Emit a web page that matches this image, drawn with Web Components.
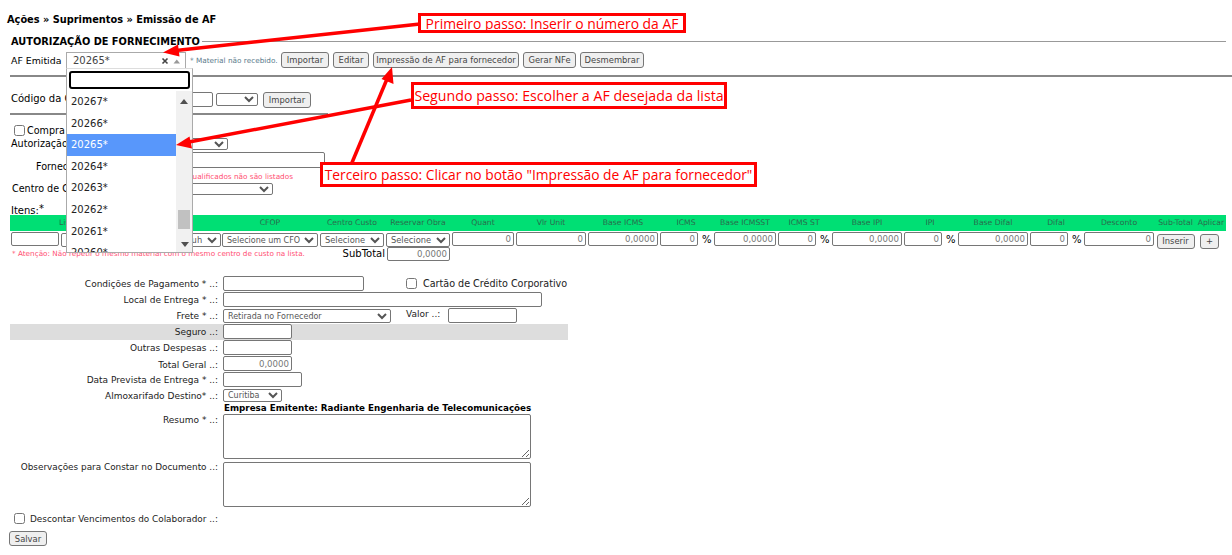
<!DOCTYPE html>
<html lang="pt-BR">
<head>
<meta charset="utf-8">
<title>Emissão de AF</title>
<style>
html,body{margin:0;padding:0;background:#fff}
</style>
</head>
<body>
<af-page></af-page>
<script>
/* Shared look of the native form controls. Rules don't cross shadow roots, so
   every element that owns inputs pastes this into its own <style>. */
var FIELD_CSS = `
input[type=text],textarea{box-sizing:border-box;margin:0;padding:0 2px;border:1px solid #767676;border-radius:2px;background:#fff;font:8.6px "DejaVu Sans",sans-serif;color:#777;display:block}
input.num{text-align:right}
textarea{resize:both}
select{box-sizing:border-box;margin:0;padding:0;border:1px solid #767676;border-radius:2px;background:#fff;font:8.3px "DejaVu Sans",sans-serif;color:#555;display:block}
input[type=checkbox]{margin:0;width:11px;height:11px;display:block;flex:none}
`;

/* Small helper: every element is a template + shadow root, nothing more. */
function defineEl(name, html) {
  var tpl = document.createElement('template');
  tpl.innerHTML = html;
  customElements.define(name, class extends HTMLElement {
    connectedCallback() {
      if (this.shadowRoot) return;
      this.attachShadow({ mode: 'open' }).appendChild(tpl.content.cloneNode(true));
    }
  });
}

defineEl('af-btn', `<style>
:host{display:block;width:var(--w,48px);height:var(--h,16px)}
button{box-sizing:border-box;width:100%;height:100%;margin:0;padding:0;border:1px solid #767676;border-radius:3px;background:#efefef;color:#444;font:8.4px "DejaVu Sans",sans-serif;white-space:nowrap}
</style><button type="button"><slot></slot></button>`);

defineEl('af-header', `<style>${FIELD_CSS}
:host{display:block;font:9.6px "DejaVu Sans",sans-serif;color:#000}
.crumb{height:36px;padding:13px 0 0 7px;box-sizing:border-box;font:bold 9.8px/13px "DejaVu Sans",sans-serif}
.legend{display:flex;align-items:center;height:12px;padding:0 6px 0 11px;gap:2px;font:bold 9.8px/12px "DejaVu Sans",sans-serif}
.legend i{flex:1;height:1px;background:#999;margin-top:-1px}
.af{display:flex;align-items:center;height:16px;margin-top:4px;padding-left:11px}
.af .lab{width:55px;font-size:9.4px}
.af .gap{width:120px;flex:none}
.note{width:87px;margin:0 4px;font-size:7.3px;color:#5b7b8c;white-space:nowrap}
.btns{display:flex;gap:4px}
.rule{height:2px;background:#888;margin:7px 0 0 10px}
.cod{display:flex;align-items:flex-start;height:16px;margin-top:15px;padding-left:11px}
.cod span{width:89px;line-height:14px;white-space:nowrap;font-size:10px}
.cod input{width:113px;height:15px}
.cod select{width:42px;height:13px;margin:1px 5px 0 3px}
.rule.short{width:318px;margin-top:5px}
.buy{display:flex;align-items:center;height:12px;margin-top:9px;padding-left:14px;gap:2px}
.row{display:grid;grid-template-columns:90px auto;grid-template-rows:var(--rh);margin-left:10px;width:max-content;--rh:12px}
.row span{white-space:nowrap}
.auth{margin-top:2px;line-height:12px}
.auth span{padding-left:1px}
.auth select{width:128px;height:12px}
.forn{margin-top:2px;--rh:16px;line-height:14px}
.forn span{padding:8px 0 0 26px}
.forn input{width:225px;height:16px}
.warn{margin:3px 0 0 10px;width:283px;height:11px;font-size:7.3px;line-height:11px;color:#ff4f73;white-space:nowrap;text-align:right}
.ccusto{margin-top:1px;line-height:12px}
.ccusto span{padding-left:2px}
.ccusto select{width:173px;height:12px}
.itens{height:13px;margin-top:7px;padding-left:11px;line-height:18px;font-size:10px}
sup{font-size:10px;line-height:0;vertical-align:2px}
</style>
<div class="crumb">Ações » Suprimentos » Emissão de AF</div>
<div class="legend">AUTORIZAÇÃO DE FORNECIMENTO<i></i></div>
<div class="af">
  <span class="lab">AF Emitida</span><span class="gap"></span>
  <span class="note">* Material não recebido.</span>
  <div class="btns">
    <af-btn style="--w:48px">Importar</af-btn>
    <af-btn style="--w:36px">Editar</af-btn>
    <af-btn style="--w:146px">Impressão de AF para fornecedor</af-btn>
    <af-btn style="--w:53px">Gerar NFe</af-btn>
    <af-btn style="--w:64px">Desmembrar</af-btn>
  </div>
</div>
<div class="rule"></div>
<div class="cod">
  <span>Código da Cotação</span><input type="text">
  <select><option></option></select>
  <af-btn style="--w:48px">Importar</af-btn>
</div>
<div class="rule short"></div>
<div class="buy"><input type="checkbox"><span>Compra Direta</span></div>
<div class="row auth"><span>Autorização de</span><select><option></option></select></div>
<div class="row forn"><span>Fornecedor</span><input type="text"></div>
<div class="warn">* Fornecedores não qualificados não são listados</div>
<div class="row ccusto"><span>Centro de Custo</span><select><option></option></select></div>
<div class="itens">Itens:<sup>*</sup></div>`);

/* Header and input row share one grid so the labels stay centred over their fields. */
defineEl('af-items', `<style>${FIELD_CSS}
:host{display:block;margin:0 6px 0 10px;font:10px "DejaVu Sans",sans-serif}
.grid{display:grid;grid-template-columns:50px 100px 61px 98px 66px 66px 64px 72px 72px 40px 14px 64px 40px 14px 72px 40px 14px 72px 40px 14px 72px 41px 30px}
.h{background:#00df74;height:16px;font-size:7.7px;line-height:16px;text-align:center;color:#2b6b4c;white-space:nowrap;overflow:hidden}
.c{padding-top:1px;height:15px;display:flex;justify-content:center;font-size:10px;line-height:15px;color:#000}
.c input{height:14px;width:calc(100% - 2px)}
.c select{height:14px;width:calc(100% - 2px);margin-top:1px}
.c af-btn{margin-top:1px}
.pc{justify-content:flex-start;padding-left:3px}
.add{justify-content:flex-start;padding-left:4px}
.foot{display:flex;height:16px;margin-top:0;position:relative}
.foot .att{width:329px;padding:0 0 0 2px;box-sizing:border-box;font-size:7.25px;line-height:14px;color:#ff4f73;white-space:nowrap}
.foot .sub{width:46px;font-size:10px;line-height:14px;text-align:right;white-space:nowrap;color:#000;flex:none}
.foot input{width:63px;height:14px;margin:0 0 0 2px;flex:none}
</style>
<div class="grid">
  <div class="h" style="grid-column:span 3;text-align:left;padding-left:49px">Lista de Material</div>
  <div class="h">CFOP</div><div class="h">Centro Custo</div><div class="h">Reservar Obra</div>
  <div class="h">Quant</div><div class="h">Vlr Unit</div><div class="h">Base ICMS</div>
  <div class="h" style="grid-column:span 2">ICMS</div><div class="h">Base ICMSST</div>
  <div class="h" style="grid-column:span 2">ICMS ST</div><div class="h">Base IPI</div>
  <div class="h" style="grid-column:span 2">IPI</div><div class="h">Base Difal</div>
  <div class="h" style="grid-column:span 2">Difal</div><div class="h">Desconto</div>
  <div class="h">Sub-Total</div><div class="h">Aplicar</div>

  <div class="c"><input type="text"></div>
  <div class="c"><select><option></option></select></div>
  <div class="c"><select style="width:100%"><option>Unida uh</option></select></div>
  <div class="c"><select style="font-size:8px"><option>Selecione um CFO</option></select></div>
  <div class="c"><select><option>Selecione</option></select></div>
  <div class="c"><select><option>Selecione</option></select></div>
  <div class="c"><input class="num" type="text" value="0"></div>
  <div class="c"><input class="num" type="text" value="0"></div>
  <div class="c"><input class="num" type="text" value="0,0000"></div>
  <div class="c"><input class="num" type="text" value="0"></div>
  <div class="c pc">%</div>
  <div class="c"><input class="num" type="text" value="0,0000"></div>
  <div class="c"><input class="num" type="text" value="0"></div>
  <div class="c pc">%</div>
  <div class="c"><input class="num" type="text" value="0,0000"></div>
  <div class="c"><input class="num" type="text" value="0"></div>
  <div class="c pc">%</div>
  <div class="c"><input class="num" type="text" value="0,0000"></div>
  <div class="c"><input class="num" type="text" value="0"></div>
  <div class="c pc">%</div>
  <div class="c"><input class="num" type="text" value="0"></div>
  <div class="c"><af-btn style="--w:38px;--h:15px">Inserir</af-btn></div>
  <div class="c add"><af-btn style="--w:19px;--h:15px">+</af-btn></div>
</div>
<div class="foot">
  <div class="att">* Atenção: Não repetir o mesmo material com o mesmo centro de custo na lista.</div>
  <div class="sub">SubTotal</div>
  <input class="num" type="text" value="0,0000">
</div>`);

/* One "label ..: field" line of the lower form. */
defineEl('af-row', `<style>
:host{display:grid;grid-template-columns:213px 1fr;height:var(--h,16px);font:9px/14px "DejaVu Sans",sans-serif;color:#222}
:host([shade]) .f,:host([shade]) .l{background:#ddd}
.l{text-align:right;padding-right:5px;white-space:nowrap;padding-top:var(--lt,1px)}
.f{display:flex;align-items:flex-start;min-width:0}
</style><div class="l"><slot name="label"></slot></div><div class="f"><slot></slot></div>`);

defineEl('af-form', `<style>${FIELD_CSS}
:host{display:block;width:558px;margin:13px 0 0 10px;font:9px "DejaVu Sans",sans-serif}
input[type=text]{height:15px;flex:none}
.extra{display:flex;align-items:center;flex:none;height:15px;margin-left:42px;gap:6px;font-size:9.6px;color:#222;white-space:nowrap}
.val{width:42px;margin-left:15px;line-height:13px;font-size:9px;color:#222;white-space:nowrap;flex:none}
.off{background:#f3f3f3;border-color:#ccc;color:#777}
.emp{font:bold 8.75px/12px "DejaVu Sans",sans-serif;color:#000;margin:0 0 0 214px;white-space:nowrap;width:320px}
.sv{margin:6px 0 0 -1px}
.dc{display:flex;align-items:center;gap:5px;height:13px;padding-left:4px;font-size:8.9px;color:#222;white-space:nowrap}
</style>
<af-row><span slot="label">Condições de Pagamento * ..:</span>
  <input type="text" style="width:141px"><div class="extra"><input type="checkbox">Cartão de Crédito Corporativo</div></af-row>
<af-row><span slot="label">Local de Entrega * ..:</span><input type="text" style="width:319px"></af-row>
<af-row><span slot="label">Frete * ..:</span>
  <select style="width:168px;height:14px;margin-top:1px;font-size:8px;flex:none"><option>Retirada no Fornecedor</option></select>
  <span class="val">Valor ..:</span><input type="text" style="width:69px"></af-row>
<af-row shade><span slot="label">Seguro ..:</span><input type="text" style="width:69px"></af-row>
<af-row><span slot="label">Outras Despesas ..:</span><input type="text" style="width:69px"></af-row>
<af-row style="--lt:2px"><span slot="label">Total Geral ..:</span><input class="num off" type="text" value="0,0000" style="width:69px"></af-row>
<af-row style="--h:17px"><span slot="label">Data Prevista de Entrega * ..:</span><input type="text" style="width:79px"></af-row>
<af-row style="--h:13px;--lt:0px"><span slot="label">Almoxarifado Destino* ..:</span>
  <select style="width:59px;height:13px;font-size:8px"><option>Curitiba</option></select></af-row>
<div class="emp">Empresa Emitente: Radiante Engenharia de Telecomunicações</div>
<af-row style="--h:48px;--lt:0px;line-height:12px"><span slot="label">Resumo * ..:</span><textarea style="width:308px;height:45px"></textarea></af-row>
<af-row style="--h:52px;--lt:0px;line-height:10px;font-size:8.9px"><span slot="label">Observações para Constar no Documento ..:</span><textarea style="width:308px;height:45px"></textarea></af-row>
<div class="dc" style="width:213px;box-sizing:border-box;margin-top:-2px"><input type="checkbox"><span>Descontar Vencimentos do Colaborador ..:</span></div>
<div class="sv"><af-btn style="--w:38px;--h:15px">Salvar</af-btn></div>`);

/* The select2 widget, open: closed box + search + scrolled result list. */
defineEl('af-select-open', `<style>
:host{position:absolute;left:66px;top:52px;width:127px;height:202px;font:10px "DejaVu Sans",sans-serif;color:#222}
.box{box-sizing:border-box;width:120px;height:16px;border:1px solid #aaa;border-bottom:0;display:flex;align-items:center;padding:0 5px 0 6px;background:#fff;color:#444}
.box b{flex:1;font-weight:normal}
.box svg{display:block}
.pop{box-sizing:border-box;width:127px;height:185px;border:1px solid #aaa;border-top:1px solid #ddd;background:#fff;overflow:hidden}
input{display:block;box-sizing:border-box;width:121px;height:18px;margin:2px 0 2px 2px;border:2px solid #000;border-radius:3px;background:#fff;padding:0}
.list{display:flex;height:163px;overflow:hidden}
ul{list-style:none;margin:0;padding:0;width:109px;flex:none}
li{height:21.6px;line-height:21.6px;padding-left:4px;box-sizing:border-box;color:#222}
li.on{background:#5897fb;color:#fff}
.bar{flex:1;background:#f1f1f1;display:flex;flex-direction:column;align-items:center;position:relative}
.thumb{position:absolute;left:2px;right:2px;top:119px;height:19px;background:#c1c1c1}
.up{margin-top:8px}
.dn{position:absolute;top:151px;left:5px}
</style>
<div class="box"><b>20265*</b>
  <svg width="20" height="10" viewBox="0 0 20 10"><path d="M2.500 2.500l5 5M7.500 2.500l-5 5" stroke="#444" stroke-width="1.6"/><path d="M13.500 7.500h6.500l-3.250-4z" fill="#999"/></svg>
</div>
<div class="pop">
  <input type="text" aria-label="Buscar">
  <div class="list">
    <ul><li>20267*</li><li>20266*</li><li class="on">20265*</li><li>20264*</li><li>20263*</li><li>20262*</li><li>20261*</li><li>20260*</li></ul>
    <div class="bar">
      <svg class="up" width="8" height="5" viewBox="0 0 8 5"><path d="M0 5h8l-4-5z" fill="#505050"/></svg>
      <div class="thumb"></div>
      <svg class="dn" width="8" height="5" viewBox="0 0 8 5"><path d="M0 0h8l-4 5z" fill="#505050"/></svg>
    </div>
  </div>
</div>`);

/* Red annotation box pasted on top of the screenshot. */
defineEl('af-callout', `<style>
:host{position:absolute;box-sizing:border-box;border:3px solid #f00;background:#fff;color:#f00;font:13.9px "Open Sans",sans-serif;white-space:nowrap;display:flex;align-items:center;justify-content:center}
</style><slot></slot>`);

defineEl('af-arrows', `<style>
:host{position:absolute;left:0;top:0;width:1232px;height:555px;pointer-events:none}
svg{display:block}
</style>
<svg width="1232" height="555" viewBox="0 0 1232 555">
  <g stroke="#f00" stroke-width="3.500" fill="#f00">
    <path d="M420 24L176 50.500" fill="none"/>
    <path d="M411 100L189 142" fill="none"/>
    <path d="M351 165L387 79" fill="none"/>
  </g>
  <g fill="#f00">
    <path d="M163 52.500L178 44.500L179.500 56.500z"/>
    <path d="M176 145L189.500 136.500L192 148.500z"/>
    <path d="M392 67L393.500 84L381.500 79z"/>
  </g>
</svg>`);

defineEl('af-page', `<style>
:host{display:block;position:relative;width:1232px;height:555px;overflow:hidden;background:#fff}
</style>
<af-header></af-header>
<af-items></af-items>
<af-form></af-form>
<af-select-open></af-select-open>
<af-arrows></af-arrows>
<af-callout style="left:418px;top:13px;width:268px;height:20px">Primeiro passo: Inserir o número da AF</af-callout>
<af-callout style="left:411px;top:82px;width:316px;height:27px;font-size:14.2px">Segundo passo: Escolher a AF desejada da lista</af-callout>
<af-callout style="left:320px;top:162px;width:437px;height:25px;font-size:13.8px">Terceiro passo: Clicar no botão "Impressão de AF para fornecedor"</af-callout>`);
</script>
</body>
</html>
